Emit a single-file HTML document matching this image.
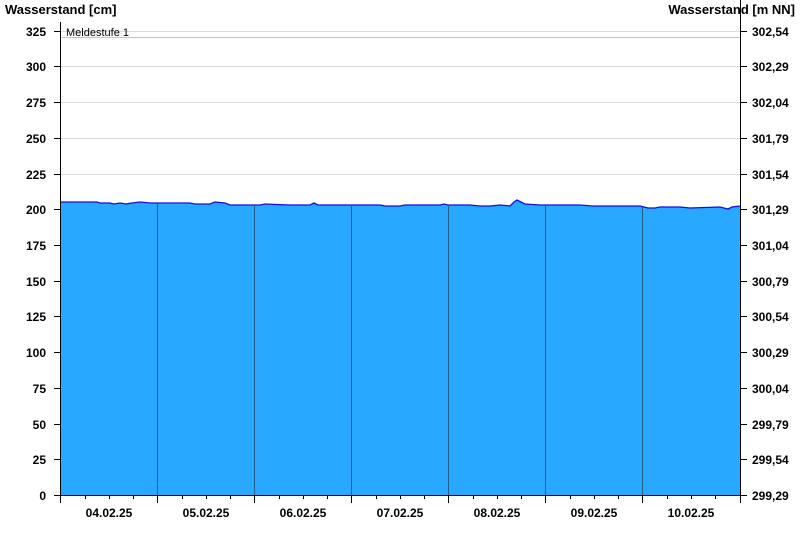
<!DOCTYPE html>
<html><head><meta charset="utf-8"><style>
html,body{margin:0;padding:0;background:#fff;}
svg{display:block;font-family:"Liberation Sans",Arial,sans-serif;}
</style></head><body>
<svg width="800" height="550" viewBox="0 0 800 550" xmlns="http://www.w3.org/2000/svg">
<rect width="800" height="550" fill="#fff"/>
<text x="5" y="14" font-size="13" font-weight="bold" fill="#000">Wasserstand [cm]</text>
<text x="795" y="14" font-size="13" font-weight="bold" fill="#000" text-anchor="end">Wasserstand [m NN]</text>
<g stroke="#dcdcdc" stroke-width="1">
<line x1="61" x2="740" y1="31.5" y2="31.5"/>
<line x1="61" x2="740" y1="66.5" y2="66.5"/>
<line x1="61" x2="740" y1="102.5" y2="102.5"/>
<line x1="61" x2="740" y1="138.5" y2="138.5"/>
<line x1="61" x2="740" y1="174.5" y2="174.5"/>
</g>
<line x1="61" x2="740" y1="37.5" y2="37.5" stroke="#f5c050" stroke-width="1"/>
<text x="66" y="36" font-size="11" fill="#000">Meldestufe 1</text>
<path d="M61,202 L97,202 L100,203 L110,203 L114,204 L120,203 L126,204 L132,203 L140,202 L150,203 L157,203 L190,203 L195,204 L210,204 L215,202 L225,203 L230,205 L260,205 L265,204 L290,205 L310,205 L314,203 L318,205 L350,205 L380,205 L385,206 L400,206 L405,205 L440,205 L444,204 L448,205 L470,205 L480,206 L490,206 L500,205 L510,206 L514,202 L517,200 L521,202 L525,204 L540,205 L560,205 L580,205 L592,206 L600,206 L640,206 L648,208 L655,208 L660,207 L680,207 L690,208 L720,207 L728,209 L732,207 L740,206 L740,495 L61,495 Z" fill="#29a8ff" stroke="none"/>
<path d="M61,202 L97,202 L100,203 L110,203 L114,204 L120,203 L126,204 L132,203 L140,202 L150,203 L157,203 L190,203 L195,204 L210,204 L215,202 L225,203 L230,205 L260,205 L265,204 L290,205 L310,205 L314,203 L318,205 L350,205 L380,205 L385,206 L400,206 L405,205 L440,205 L444,204 L448,205 L470,205 L480,206 L490,206 L500,205 L510,206 L514,202 L517,200 L521,202 L525,204 L540,205 L560,205 L580,205 L592,206 L600,206 L640,206 L648,208 L655,208 L660,207 L680,207 L690,208 L720,207 L728,209 L732,207 L740,206" fill="none" stroke="#1010e0" stroke-width="1.3"/>
<g stroke="#1d5f8a" stroke-width="1">
<line x1="157.5" x2="157.5" y1="204" y2="495"/>
<line x1="254.5" x2="254.5" y1="205" y2="495"/>
<line x1="351.5" x2="351.5" y1="205" y2="495"/>
<line x1="448.5" x2="448.5" y1="205" y2="495"/>
<line x1="545.5" x2="545.5" y1="205" y2="495"/>
<line x1="642.5" x2="642.5" y1="207" y2="495"/>
</g>
<g stroke="#000" stroke-width="1">
<line x1="60.5" x2="60.5" y1="22" y2="503"/>
<line x1="740.5" x2="740.5" y1="0" y2="495"/>
<line x1="55" x2="741" y1="495.5" y2="495.5"/>
</g>
<g stroke="#000" stroke-width="1" id="yt">
<line x1="54" x2="61" y1="31.5" y2="31.5"/><line x1="740" x2="747" y1="31.5" y2="31.5"/>
<line x1="54" x2="61" y1="66.5" y2="66.5"/><line x1="740" x2="747" y1="66.5" y2="66.5"/>
<line x1="54" x2="61" y1="102.5" y2="102.5"/><line x1="740" x2="747" y1="102.5" y2="102.5"/>
<line x1="54" x2="61" y1="138.5" y2="138.5"/><line x1="740" x2="747" y1="138.5" y2="138.5"/>
<line x1="54" x2="61" y1="174.5" y2="174.5"/><line x1="740" x2="747" y1="174.5" y2="174.5"/>
<line x1="54" x2="61" y1="209.5" y2="209.5"/><line x1="740" x2="747" y1="209.5" y2="209.5"/>
<line x1="54" x2="61" y1="245.5" y2="245.5"/><line x1="740" x2="747" y1="245.5" y2="245.5"/>
<line x1="54" x2="61" y1="281.5" y2="281.5"/><line x1="740" x2="747" y1="281.5" y2="281.5"/>
<line x1="54" x2="61" y1="316.5" y2="316.5"/><line x1="740" x2="747" y1="316.5" y2="316.5"/>
<line x1="54" x2="61" y1="352.5" y2="352.5"/><line x1="740" x2="747" y1="352.5" y2="352.5"/>
<line x1="54" x2="61" y1="388.5" y2="388.5"/><line x1="740" x2="747" y1="388.5" y2="388.5"/>
<line x1="54" x2="61" y1="424.5" y2="424.5"/><line x1="740" x2="747" y1="424.5" y2="424.5"/>
<line x1="54" x2="61" y1="459.5" y2="459.5"/><line x1="740" x2="747" y1="459.5" y2="459.5"/>
<line x1="54" x2="61" y1="495.5" y2="495.5"/><line x1="740" x2="747" y1="495.5" y2="495.5"/>
</g>
<g stroke="#000" stroke-width="1">
<line x1="157.5" x2="157.5" y1="495" y2="503"/><line x1="254.5" x2="254.5" y1="495" y2="503"/>
<line x1="351.5" x2="351.5" y1="495" y2="503"/><line x1="448.5" x2="448.5" y1="495" y2="503"/>
<line x1="545.5" x2="545.5" y1="495" y2="503"/><line x1="642.5" x2="642.5" y1="495" y2="503"/>
<line x1="740.5" x2="740.5" y1="495" y2="503"/>
<line x1="85.5" x2="85.5" y1="495" y2="499"/><line x1="109.5" x2="109.5" y1="495" y2="499"/><line x1="133.5" x2="133.5" y1="495" y2="499"/>
<line x1="182.5" x2="182.5" y1="495" y2="499"/><line x1="206.5" x2="206.5" y1="495" y2="499"/><line x1="230.5" x2="230.5" y1="495" y2="499"/>
<line x1="279.5" x2="279.5" y1="495" y2="499"/><line x1="303.5" x2="303.5" y1="495" y2="499"/><line x1="327.5" x2="327.5" y1="495" y2="499"/>
<line x1="376.5" x2="376.5" y1="495" y2="499"/><line x1="400.5" x2="400.5" y1="495" y2="499"/><line x1="424.5" x2="424.5" y1="495" y2="499"/>
<line x1="473.5" x2="473.5" y1="495" y2="499"/><line x1="497.5" x2="497.5" y1="495" y2="499"/><line x1="521.5" x2="521.5" y1="495" y2="499"/>
<line x1="570.5" x2="570.5" y1="495" y2="499"/><line x1="594.5" x2="594.5" y1="495" y2="499"/><line x1="618.5" x2="618.5" y1="495" y2="499"/>
<line x1="667.5" x2="667.5" y1="495" y2="499"/><line x1="691.5" x2="691.5" y1="495" y2="499"/><line x1="715.5" x2="715.5" y1="495" y2="499"/>
</g>
<g font-size="12" font-weight="bold" fill="#000" text-anchor="end">
<text x="46" y="36">325</text><text x="46" y="71">300</text><text x="46" y="107">275</text>
<text x="46" y="143">250</text><text x="46" y="179">225</text><text x="46" y="214">200</text>
<text x="46" y="250">175</text><text x="46" y="286">150</text><text x="46" y="321">125</text>
<text x="46" y="357">100</text><text x="46" y="393">75</text><text x="46" y="429">50</text>
<text x="46" y="464">25</text><text x="46" y="500">0</text>
</g>
<g font-size="12" font-weight="bold" fill="#000">
<text x="752" y="36">302,54</text><text x="752" y="71">302,29</text><text x="752" y="107">302,04</text>
<text x="752" y="143">301,79</text><text x="752" y="179">301,54</text><text x="752" y="214">301,29</text>
<text x="752" y="250">301,04</text><text x="752" y="286">300,79</text><text x="752" y="321">300,54</text>
<text x="752" y="357">300,29</text><text x="752" y="393">300,04</text><text x="752" y="429">299,79</text>
<text x="752" y="464">299,54</text><text x="752" y="500">299,29</text>
</g>
<g font-size="12" font-weight="bold" fill="#000" text-anchor="middle">
<text x="109" y="517">04.02.25</text><text x="206" y="517">05.02.25</text><text x="303" y="517">06.02.25</text>
<text x="400" y="517">07.02.25</text><text x="497" y="517">08.02.25</text><text x="594" y="517">09.02.25</text>
<text x="691" y="517">10.02.25</text>
</g>
</svg>
</body></html>
